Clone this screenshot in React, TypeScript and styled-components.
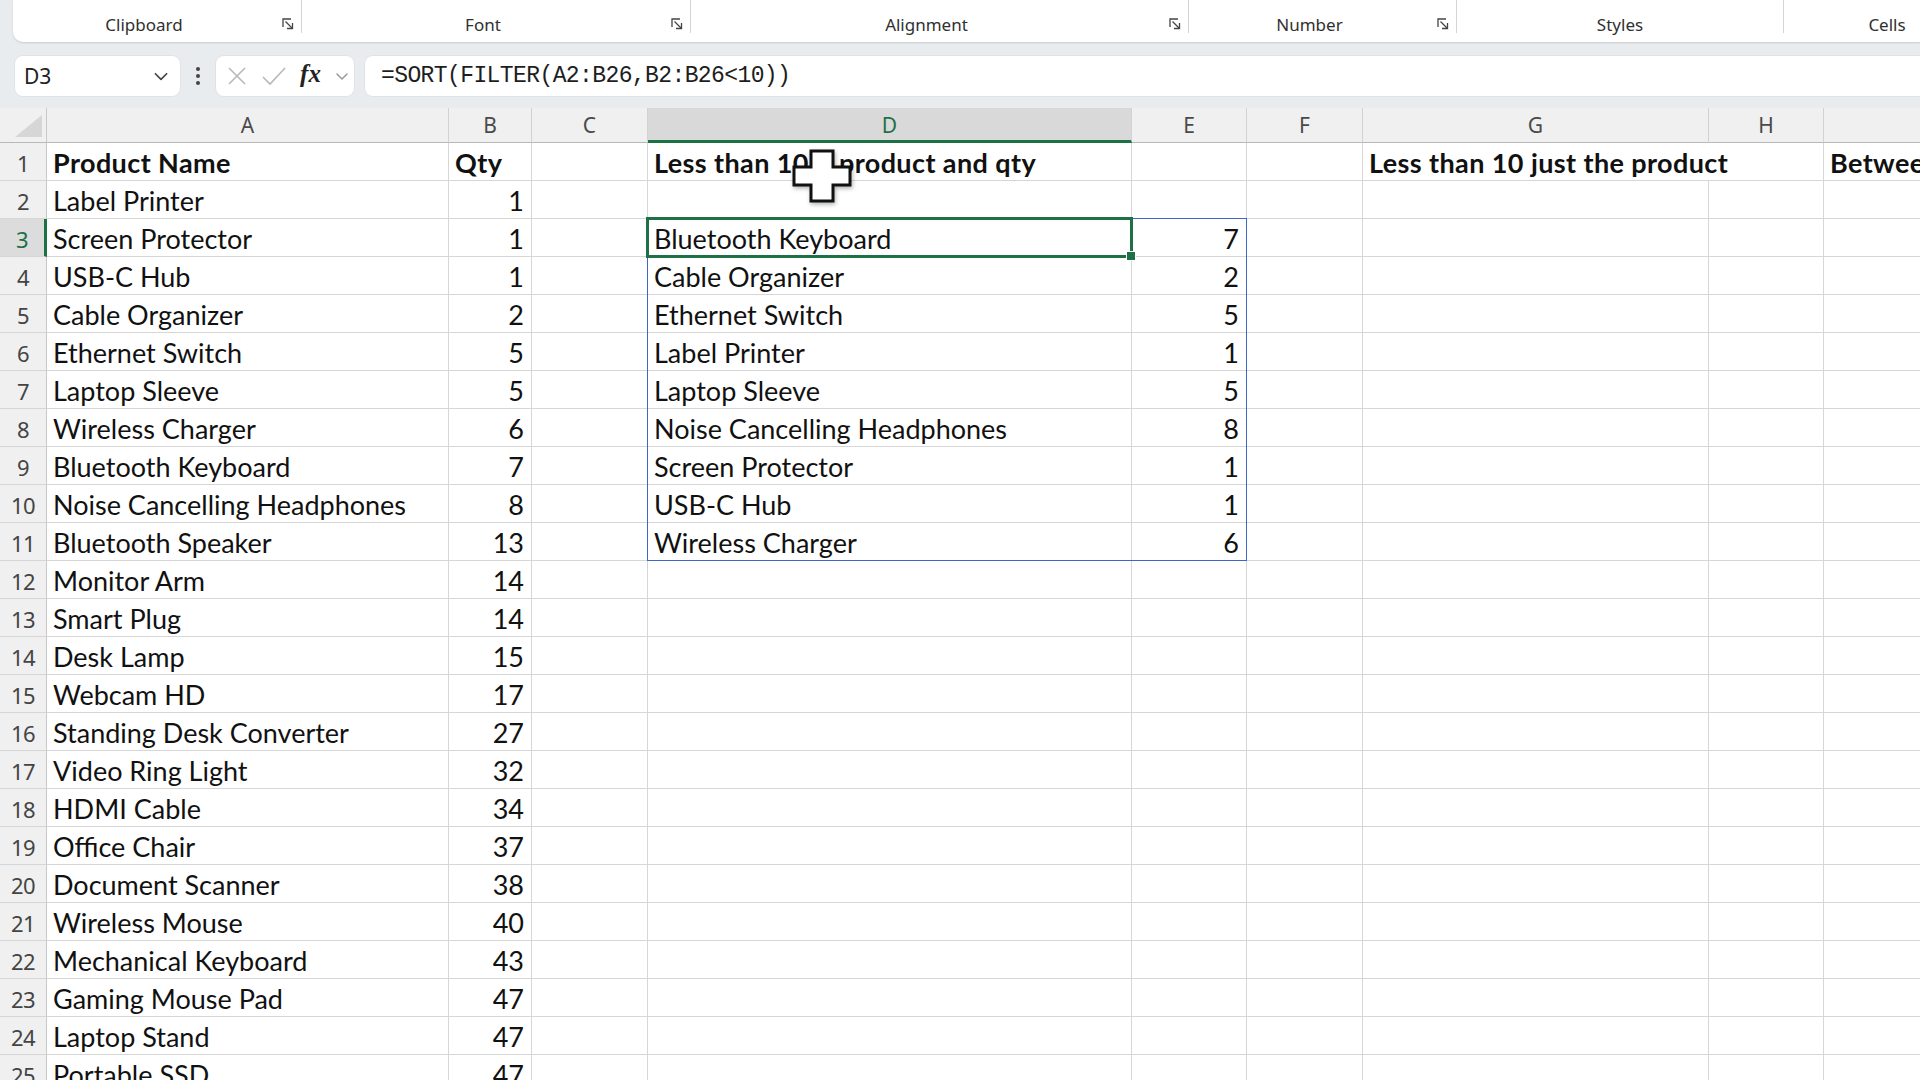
import React from "react";
import styled, { createGlobalStyle } from "styled-components";

const GlobalStyle = createGlobalStyle`
  html, body {
    margin: 0;
    padding: 0;
    overflow: hidden;
    background: #e9ecef;
  }
  body {
    font-family: "Noto Sans", "Open Sans", sans-serif;
  }
`;

const Screen = styled.div`
  width: 1920px;
  height: 1080px;
  overflow: hidden;
  position: relative;
  display: flex;
  flex-direction: column;
  background: #e9ecef;
`;

/* ---------- ribbon ---------- */

const Ribbon = styled.div`
  height: 42px;
  margin-left: 13px;
  background: #fff;
  border-radius: 0 0 0 10px;
  box-shadow: 0 1px 2px rgba(0, 0, 0, 0.14);
  display: flex;
  flex-shrink: 0;
`;

const Group = styled.div<{ $w: number }>`
  width: ${(p) => p.$w}px;
  display: flex;
  align-items: center;
  padding-top: 6px;
  box-sizing: border-box;
  flex-shrink: 0;
`;

const GroupLabel = styled.div`
  flex: 1;
  text-align: center;
  font-size: 17px;
  color: #303030;
  white-space: nowrap;
`;

const Launcher = styled.div`
  width: 26px;
  display: flex;
  justify-content: center;
  color: #555;
`;

const Divider = styled.div`
  width: 1px;
  height: 33px;
  background: #d4d4d4;
  flex-shrink: 0;
`;

/* ---------- formula bar ---------- */

const FormulaRow = styled.div`
  height: 66px;
  display: flex;
  align-items: center;
  padding: 2px 0 0 15px;
  box-sizing: border-box;
  flex-shrink: 0;
`;

const WhiteBox = styled.div`
  height: 40px;
  background: #fff;
  border-radius: 8px;
  box-shadow: 0 0 0 1px #e0e3e6;
  display: flex;
  align-items: center;
  box-sizing: border-box;
`;

const NameBox = styled(WhiteBox)`
  width: 165px;
  padding: 0 10px 0 9px;
  justify-content: space-between;
  font-size: 21px;
  color: #222;
`;

const Kebab = styled.div`
  width: 36px;
  display: flex;
  justify-content: center;
  color: #444;
`;

const FxBox = styled(WhiteBox)`
  width: 138px;
  padding: 0 4px 0 10px;
  justify-content: space-between;
`;

const FxText = styled.span`
  font-family: "Liberation Serif", "DejaVu Serif", serif;
  font-style: italic;
  font-weight: 700;
  font-size: 25px;
  color: #222;
  margin-top: -4px;
`;

const FormulaBox = styled(WhiteBox)`
  flex: 1;
  margin-left: 11px;
  margin-right: -20px;
  padding-left: 16px;
  font-family: "Liberation Mono", "DejaVu Sans Mono", monospace;
  font-size: 23px;
  letter-spacing: -0.6px;
  color: #1e1e1e;
`;

/* ---------- sheet ---------- */

const Sheet = styled.div`
  flex: 1;
  display: grid;
  grid-template-columns: 47px 402px 83px 116px 484px 115px 116px 346px 115px 320px;
  grid-template-rows: 35px repeat(26, 38px);
  background: #fff;
  font-family: Lato, "Liberation Sans", sans-serif;
`;

const Corner = styled.div`
  grid-area: 1 / 1;
  background: #f0f0f0;
  border-bottom: 1px solid #b9b9b9;
  border-right: 1px solid #c8c8c8;
  position: relative;
  &::after {
    content: "";
    position: absolute;
    right: 4px;
    bottom: 5px;
    border-style: solid;
    border-width: 0 0 22px 27px;
    border-color: transparent transparent #d6d6d6 transparent;
  }
`;

const ColHeader = styled.div<{ $col: number; $active?: boolean }>`
  grid-area: 1 / ${(p) => p.$col};
  display: flex;
  align-items: center;
  justify-content: center;
  box-sizing: border-box;
  font-family: "Noto Sans", "Open Sans", sans-serif;
  font-size: 21px;
  background: ${(p) => (p.$active ? "#d9d9d9" : "#f0f0f0")};
  color: ${(p) => (p.$active ? "#1e7145" : "#4a4a4a")};
  border-right: 1px solid #d2d2d2;
  border-bottom: ${(p) => (p.$active ? "3px solid #1e7145" : "1px solid #b9b9b9")};
  padding-top: ${(p) => (p.$active ? "2px" : "0")};
`;

const RowHeader = styled.div<{ $row: number; $active?: boolean }>`
  grid-area: ${(p) => p.$row} / 1;
  display: flex;
  align-items: center;
  justify-content: center;
  padding-top: 2px;
  box-sizing: border-box;
  font-family: "Noto Sans", "Open Sans", sans-serif;
  font-size: 22px;
  letter-spacing: -0.5px;
  background: ${(p) => (p.$active ? "#dcdcdc" : "#f0f0f0")};
  color: ${(p) => (p.$active ? "#1e7145" : "#444")};
  border-bottom: 1px solid #d6d6d6;
  border-right: ${(p) => (p.$active ? "3px solid #1e7145" : "1px solid #c8c8c8")};
`;

const Cell = styled.div<{
  $row: number;
  $col: number;
  $num?: boolean;
  $bold?: boolean;
  $spill?: boolean;
}>`
  grid-area: ${(p) => p.$row} / ${(p) => p.$col};
  display: flex;
  align-items: center;
  justify-content: ${(p) => (p.$num ? "flex-end" : "flex-start")};
  padding: 2px 7px 0 6px;
  box-sizing: border-box;
  font-size: 27px;
  font-weight: ${(p) => (p.$bold ? 700 : 400)};
  letter-spacing: ${(p) => (p.$bold ? "0.4px" : "0")};
  color: #111;
  white-space: nowrap;
  overflow: ${(p) => (p.$spill ? "visible" : "hidden")};
  border-bottom: 1px solid #d6d6d6;
  border-right: ${(p) => (p.$spill ? "none" : "1px solid #d6d6d6")};
  position: relative;
  z-index: ${(p) => (p.$spill ? 1 : 0)};
`;

const SpillRange = styled.div`
  grid-area: 4 / 5 / 13 / 7;
  margin: -1px 0 0 -1px;
  border: 1.5px solid #3e66c4;
  pointer-events: none;
  z-index: 2;
`;

const ActiveCell = styled.div`
  grid-area: 4 / 5 / 5 / 6;
  margin: -2px -1px -1px -2px;
  border: 3px solid #1e7145;
  pointer-events: none;
  position: relative;
  z-index: 3;
  &::after {
    content: "";
    position: absolute;
    right: -6px;
    bottom: -6px;
    width: 8px;
    height: 8px;
    background: #1e7145;
    border: 1px solid #fff;
  }
`;

const Pointer = styled.svg`
  position: absolute;
  left: 792px;
  top: 149px;
  z-index: 10;
  filter: drop-shadow(1px 2px 2px rgba(0, 0, 0, 0.3));
`;

/* ---------- data ---------- */

type Val = string | number | null;

const columns = ["A", "B", "C", "D", "E", "F", "G", "H", "I"];

const products: [string, number][] = [
  ["Label Printer", 1],
  ["Screen Protector", 1],
  ["USB-C Hub", 1],
  ["Cable Organizer", 2],
  ["Ethernet Switch", 5],
  ["Laptop Sleeve", 5],
  ["Wireless Charger", 6],
  ["Bluetooth Keyboard", 7],
  ["Noise Cancelling Headphones", 8],
  ["Bluetooth Speaker", 13],
  ["Monitor Arm", 14],
  ["Smart Plug", 14],
  ["Desk Lamp", 15],
  ["Webcam HD", 17],
  ["Standing Desk Converter", 27],
  ["Video Ring Light", 32],
  ["HDMI Cable", 34],
  ["Office Chair", 37],
  ["Document Scanner", 38],
  ["Wireless Mouse", 40],
  ["Mechanical Keyboard", 43],
  ["Gaming Mouse Pad", 47],
  ["Laptop Stand", 47],
  ["Portable SSD", 47],
  ["Phone Stand", 49],
];

const filtered = products
  .filter(([, q]) => q < 10)
  .sort((a, b) => a[0].localeCompare(b[0]));

const rows: Val[][] = [];
rows.push([
  "Product Name",
  "Qty",
  null,
  "Less than 10 – product and qty",
  null,
  null,
  "Less than 10 just the product",
  null,
  "Between 10 and 20",
]);
products.forEach(([name, qty], i) => {
  const r = i + 2;
  const spill = filtered[r - 3];
  rows.push([
    name,
    qty,
    null,
    spill ? spill[0] : null,
    spill ? spill[1] : null,
    null,
    null,
    null,
    null,
  ]);
});

const Chevron = ({ size = 16, color = "#444" }: { size?: number; color?: string }) => (
  <svg width={size} height={size} viewBox="0 0 16 16" fill="none">
    <path d="M3 6l5 5 5-5" stroke={color} strokeWidth="1.5" strokeLinecap="round" strokeLinejoin="round" />
  </svg>
);

const LauncherIcon = () => (
  <svg width="12" height="12" viewBox="0 0 12 12" fill="none" stroke="#444" strokeWidth="1.3">
    <path d="M1 9V1h8" />
    <path d="M3.5 3.5l6.5 6.5" />
    <path d="M10.5 5v5.5H5" />
  </svg>
);

const groups = [
  { label: "Clipboard", w: 288, launcher: true },
  { label: "Font", w: 388, launcher: true },
  { label: "Alignment", w: 497, launcher: true },
  { label: "Number", w: 267, launcher: true },
  { label: "Styles", w: 326, launcher: false },
  { label: "Cells", w: 206, launcher: false },
];

export default function App() {
  return (
    <Screen>
      <GlobalStyle />
      <Ribbon>
        {groups.map((g) => (
          <React.Fragment key={g.label}>
            <Group $w={g.w}>
              <GroupLabel>{g.label}</GroupLabel>
              {g.launcher && (
                <Launcher>
                  <LauncherIcon />
                </Launcher>
              )}
            </Group>
            <Divider />
          </React.Fragment>
        ))}
      </Ribbon>

      <FormulaRow>
        <NameBox>
          <span>D3</span>
          <Chevron size={18} />
        </NameBox>
        <Kebab>
          <svg width="6" height="22" viewBox="0 0 6 22">
            <circle cx="3" cy="4" r="2" fill="#444" />
            <circle cx="3" cy="11" r="2" fill="#444" />
            <circle cx="3" cy="18" r="2" fill="#444" />
          </svg>
        </Kebab>
        <FxBox>
          <svg width="22" height="22" viewBox="0 0 22 22" stroke="#b8b8b8" strokeWidth="1.6" fill="none">
            <path d="M3 3l16 16M19 3L3 19" />
          </svg>
          <svg width="26" height="22" viewBox="0 0 26 22" stroke="#b8b8b8" strokeWidth="1.6" fill="none">
            <path d="M2 12l7 7L24 3" />
          </svg>
          <FxText>fx</FxText>
          <Chevron size={16} color="#999" />
        </FxBox>
        <FormulaBox>=SORT(FILTER(A2:B26,B2:B26&lt;10))</FormulaBox>
      </FormulaRow>

      <Sheet>
        <Corner />
        {columns.map((c, i) => (
          <ColHeader key={c} $col={i + 2} $active={c === "D"}>
            {c === "I" ? "" : c}
          </ColHeader>
        ))}
        {rows.map((r, ri) => {
          const row = ri + 1;
          const gridRow = row + 1;
          return (
            <React.Fragment key={row}>
              <RowHeader $row={gridRow} $active={row === 3}>
                {row}
              </RowHeader>
              {r.map((v, ci) => (
                <Cell
                  key={ci}
                  $row={gridRow}
                  $col={ci + 2}
                  $num={typeof v === "number"}
                  $bold={row === 1}
                  $spill={row === 1 && (ci === 6 || ci === 8)}
                >
                  {v}
                </Cell>
              ))}
            </React.Fragment>
          );
        })}
        <SpillRange />
        <ActiveCell />
      </Sheet>

      <Pointer width="60" height="54" viewBox="0 0 60 54">
        <path
          d="M19 2H41V18H58V36H41V52H19V36H2V18H19Z"
          fill="#fff"
          stroke="#111"
          strokeWidth="3"
          strokeLinejoin="miter"
        />
      </Pointer>
    </Screen>
  );
}
